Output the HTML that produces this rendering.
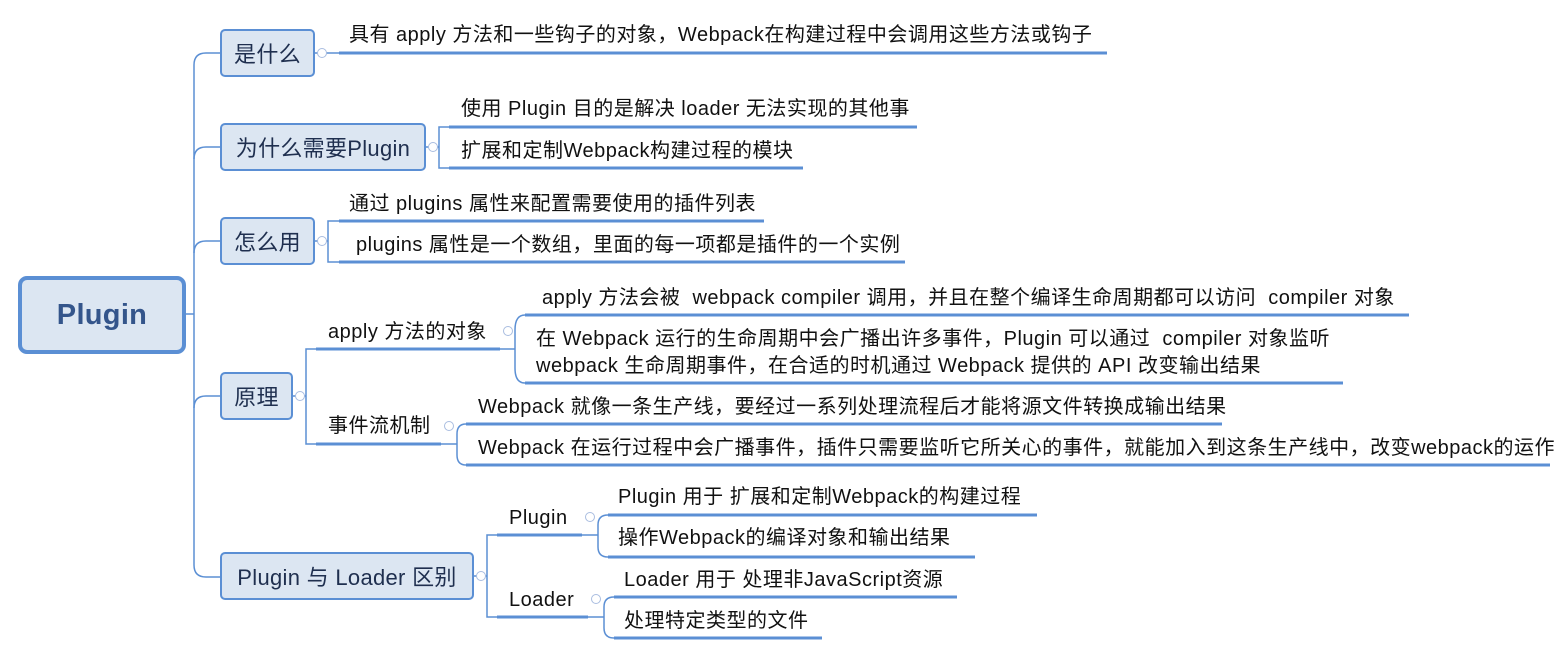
<!DOCTYPE html>
<html><head><meta charset="utf-8"><style>
body{margin:0;width:1568px;height:655px;background:#fff;position:relative;overflow:hidden;font-family:"Liberation Sans","Noto Sans CJK SC",sans-serif;}
.t{position:absolute;font-size:20px;letter-spacing:0.5px;line-height:24px;color:#111;white-space:nowrap;}
.b{position:absolute;box-sizing:border-box;background:#dce6f2;border:2px solid #5b8fd4;border-radius:5px;font-size:22px;letter-spacing:0.3px;color:#1f2f4f;display:flex;align-items:center;justify-content:center;white-space:nowrap;}
svg{position:absolute;left:0;top:0;}
</style></head><body>
<svg width="1568" height="655" fill="none">
<g stroke="#5b8fd4" stroke-width="1.5">
<path d="M186 314H194"/>
<path d="M220 53H206Q194 53 194 65V565Q194 577 206 577H220"/>
<path d="M194 159Q194 147 206 147H220M194 253Q194 241 206 241H220M194 408Q194 396 206 396H220"/>
<path d="M315 53H339M426 147H439M449 127H439V168H449M315 241H328M339 221H328V262H339"/>
<path d="M293 396H306M316 349H306V444H316"/>
<path d="M500 349H515M525 315Q515 315 515 330V368Q515 383 525 383"/>
<path d="M441 444H457M466 424Q457 424 457 434V455Q457 465 466 465"/>
<path d="M474 576H487M497 535H487V617H497"/>
<path d="M582 535H598M608 515Q598 515 598 525V547Q598 557 608 557"/>
<path d="M588 617H604M614 597Q604 597 604 607V628Q604 638 614 638"/>
</g>
<g stroke="#5b8fd4" stroke-width="3">
<path d="M339 53H1107M449 127H917M449 168H803M339 221H764M339 262H905"/>
<path d="M316 349H500M316 444H441M525 315H1409M525 383H1343M466 424H1222M466 465H1550"/>
<path d="M497 535H582M497 617H588M608 515H1037M608 557H975M614 597H957M614 638H822"/>
</g>
<g stroke="#a9bde0" stroke-width="1" fill="#fff">
<circle cx="322" cy="53" r="4.5"/><circle cx="433" cy="147" r="4.5"/><circle cx="322" cy="241" r="4.5"/>
<circle cx="300" cy="396" r="4.5"/><circle cx="508" cy="331" r="4.5"/><circle cx="449" cy="426" r="4.5"/>
<circle cx="481" cy="576" r="4.5"/><circle cx="590" cy="517" r="4.5"/><circle cx="596" cy="599" r="4.5"/>
</g>
</svg>
<div class="b" style="left:18px;top:276px;width:168px;height:78px;border-width:4px;border-radius:9px;font-size:29px;font-weight:bold;color:#34558b;">Plugin</div>
<div class="b" style="left:220px;top:29px;width:95px;height:48px;">是什么</div>
<div class="b" style="left:220px;top:123px;width:206px;height:48px;">为什么需要Plugin</div>
<div class="b" style="left:220px;top:217px;width:95px;height:48px;">怎么用</div>
<div class="b" style="left:220px;top:372px;width:73px;height:48px;">原理</div>
<div class="b" style="left:220px;top:552px;width:254px;height:48px;">Plugin 与 Loader 区别</div>

<div class="t" style="left:349px;top:23px;">具有 apply 方法和一些钩子的对象，Webpack在构建过程中会调用这些方法或钩子</div>
<div class="t" style="left:461px;top:97px;">使用 Plugin 目的是解决 loader 无法实现的其他事</div>
<div class="t" style="left:461px;top:139px;">扩展和定制Webpack构建过程的模块</div>
<div class="t" style="left:349px;top:192px;">通过 plugins 属性来配置需要使用的插件列表</div>
<div class="t" style="left:356px;top:233px;">plugins 属性是一个数组，里面的每一项都是插件的一个实例</div>
<div class="t" style="left:328px;top:320px;">apply 方法的对象</div>
<div class="t" style="left:328px;top:414px;">事件流机制</div>
<div class="t" style="left:542px;top:286px;">apply 方法会被&nbsp; webpack compiler 调用，并且在整个编译生命周期都可以访问&nbsp; compiler 对象</div>
<div class="t" style="left:536px;top:326px;line-height:27px;">在 Webpack 运行的生命周期中会广播出许多事件，Plugin 可以通过&nbsp; compiler 对象监听<br>webpack 生命周期事件，在合适的时机通过 Webpack 提供的 API 改变输出结果</div>
<div class="t" style="left:478px;top:395px;">Webpack 就像一条生产线，要经过一系列处理流程后才能将源文件转换成输出结果</div>
<div class="t" style="left:478px;top:436px;">Webpack 在运行过程中会广播事件，插件只需要监听它所关心的事件，就能加入到这条生产线中，改变webpack的运作</div>
<div class="t" style="left:509px;top:506px;">Plugin</div>
<div class="t" style="left:509px;top:588px;">Loader</div>
<div class="t" style="left:618px;top:485px;">Plugin 用于 扩展和定制Webpack的构建过程</div>
<div class="t" style="left:618px;top:526px;">操作Webpack的编译对象和输出结果</div>
<div class="t" style="left:624px;top:568px;">Loader 用于 处理非JavaScript资源</div>
<div class="t" style="left:624px;top:609px;">处理特定类型的文件</div>
</body></html>
